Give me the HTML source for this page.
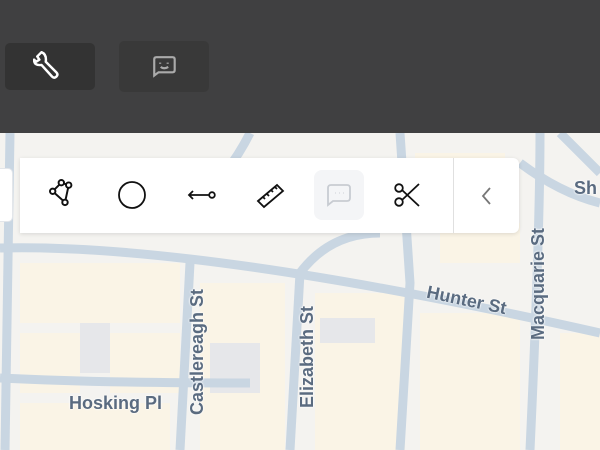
<!DOCTYPE html>
<html><head><style>
body{margin:0;width:600px;height:450px;overflow:hidden;position:relative;font-family:"Liberation Sans",sans-serif;background:#f4f3f0}
.hdr{position:absolute;left:0;top:0;width:600px;height:133px;background:#404041}
.b{position:absolute;border-radius:5px}
.tb{position:absolute;left:20px;top:158px;width:499px;height:75px;background:#fff;border-radius:0 6px 6px 0;box-shadow:0 1px 4px rgba(0,0,0,.12)}
.ic{position:absolute;top:179px}
.lbl{position:absolute;color:#5a6b80;font-weight:bold;font-size:18px;text-shadow:0 0 2px #fff,0 0 2px #fff;white-space:nowrap}
</style></head><body>
<svg style="position:absolute;left:0;top:133px" width="600" height="317">
<g fill="#faf4e6">
<rect x="20" y="130" width="160" height="60"/><rect x="20" y="200" width="60" height="60"/><rect x="110" y="200" width="70" height="60"/><rect x="200" y="150" width="85" height="170"/><rect x="315" y="160" width="90" height="160"/><rect x="420" y="180" width="100" height="140"/><rect x="560" y="200" width="40" height="120"/><rect x="415" y="20" width="90" height="70"/><rect x="440" y="90" width="80" height="40"/><rect x="20" y="270" width="150" height="50"/>
</g>
<g fill="#e6e7ea"><rect x="210" y="210" width="50" height="50"/><rect x="320" y="185" width="55" height="25"/><rect x="80" y="190" width="30" height="50"/></g>
<g fill="none" stroke="#c9d6e2" stroke-width="9">
<path d="M0 115 Q200 110 600 200"/>
<path d="M0 245 Q100 250 250 250"/>
<path d="M190 130 L180 317"/><path d="M300 140 L290 317"/>
<path d="M400 0 L410 150 L400 317"/><path d="M540 0 Q540 100 530 317"/>
<path d="M560 0 L600 40"/><path d="M520 30 Q560 60 600 70"/>
<path d="M10 0 L5 317"/><path d="M300 140 Q330 100 380 100"/>
<path d="M250 0 Q230 40 190 80"/>
</g>
</svg>
<div class="lbl" style="left:69px;top:393px">Hosking Pl</div>
<div class="lbl" style="left:426px;top:290px;transform:rotate(12deg)">Hunter St</div>
<div class="lbl" style="left:187px;top:415px;transform:rotate(-90deg);transform-origin:0 0">Castlereagh St</div>
<div class="lbl" style="left:297px;top:408px;transform:rotate(-90deg);transform-origin:0 0">Elizabeth St</div>
<div class="lbl" style="left:528px;top:340px;transform:rotate(-90deg);transform-origin:0 0">Macquarie St</div>
<div class="lbl" style="left:574px;top:178px">Sh</div>
<div class="hdr"></div>
<div class="b" style="left:5px;top:43px;width:90px;height:47px;background:#333"></div>
<div class="b" style="left:119px;top:41px;width:90px;height:51px;background:#393939"></div>
<svg style="position:absolute;left:33px;top:50px" width="34" height="32" viewBox="0 0 32 30" fill="none" stroke="#fff" stroke-width="2.3" stroke-linejoin="round"><path d="M8 2 L4 6 L6 9 L3 11 L1 9 Q1 15 8 14 L18 25 Q20 27 22 25 Q24 23 22 21 L12 11 Q13 4 8 2 Z"/></svg>
<svg style="position:absolute;left:151px;top:54px" width="28" height="28" viewBox="0 0 26 26" fill="none" stroke="#aaa" stroke-width="2"><path d="M3 20 V5 Q3 3 5 3 H20 Q22 3 22 5 V15 Q22 17 20 17 H7 Z"/><path d="M8.5 8v1M15.5 8v1M9 12 Q12 14.5 16 12"/></svg>
<div style="position:absolute;left:0;top:168px;width:12px;height:52px;background:#fff;border:1px solid #e3e6ea;border-left:none;border-radius:0 5px 5px 0"></div>
<div class="tb"></div>
<div style="position:absolute;left:453px;top:158px;width:1px;height:75px;background:#e0e0e0"></div>
<svg class="ic" style="left:49px" width="32" height="32" viewBox="0 0 26 26" fill="none" stroke="#111" stroke-width="1.6"><path d="M3 10 L10 3 L16 5 L13 19 Z"/><circle cx="3" cy="10" r="2.2" fill="#fff"/><circle cx="10" cy="3" r="2.2" fill="#fff"/><circle cx="16" cy="5" r="2.2" fill="#fff"/><circle cx="13" cy="19" r="2.2" fill="#fff"/></svg>
<svg class="ic" style="left:117px" width="32" height="32"><circle cx="15" cy="16" r="13" fill="none" stroke="#111" stroke-width="1.8"/></svg>
<svg class="ic" style="left:186px" width="32" height="32" fill="none" stroke="#111" stroke-width="1.8"><path d="M3 16 H23M7 12 L3 16 L7 20"/><circle cx="26" cy="16" r="2.8" fill="#fff"/></svg>
<svg class="ic" style="left:255px" width="32" height="32" fill="none" stroke="#111" stroke-width="1.8"><path d="M3 22 L22 6 L28 12 L9 28 Z M8 18 l2 2 M12 15 l2 2 M16 11 l2 2 M20 8 l2 2"/></svg>
<div class="b" style="left:314px;top:170px;width:50px;height:50px;background:#f4f5f7;border-radius:8px"></div>
<svg class="ic" style="left:326px;top:183px" width="26" height="26" fill="none" stroke="#c8ccd2" stroke-width="1.8"><path d="M2 22 V5 Q2 2 5 2 H21 Q24 2 24 5 V15 Q24 18 21 18 H7 Z"/><path d="M9 10h.5M13 10h.5M17 10h.5"/></svg>
<svg class="ic" style="left:393px" width="30" height="32" fill="none" stroke="#111" stroke-width="1.8"><circle cx="6" cy="9" r="3.8"/><circle cx="6" cy="23" r="3.8"/><path d="M9 11 L26 27M9 21 L26 5"/></svg>
<svg class="ic" style="left:480px;top:186px" width="14" height="20" fill="none" stroke="#777" stroke-width="1.8"><path d="M10 2 L3 10 L10 18"/></svg>
</body></html>
